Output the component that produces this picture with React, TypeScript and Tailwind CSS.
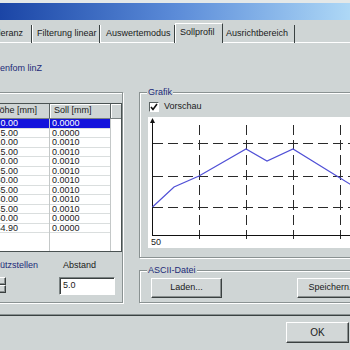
import React from 'react';

const rows = [
  { h: '0.00', s: '0.0000' },
  { h: '5.00', s: '0.0000' },
  { h: '10.00', s: '0.0010' },
  { h: '15.00', s: '0.0010' },
  { h: '20.00', s: '0.0010' },
  { h: '25.00', s: '0.0010' },
  { h: '30.00', s: '0.0010' },
  { h: '35.00', s: '0.0010' },
  { h: '40.00', s: '0.0010' },
  { h: '45.00', s: '0.0010' },
  { h: '50.00', s: '0.0000' },
  { h: '54.90', s: '0.0000' },
];

const raised =
  'bg-[#d2d7d7] border border-t-white border-l-white border-r-[#3a4040] border-b-[#3a4040] shadow-[inset_-1px_-1px_0_#8a9090]';
const etched = 'border border-[#8a9292] shadow-[inset_1px_1px_0_#fff,1px_1px_0_#fff]';

const Chart: React.FC = () => (
  <svg width="210" height="131" viewBox="0 0 210 131">
    <g stroke="#2a2a2a" strokeWidth="1" strokeDasharray="10 5" fill="none">
      <line x1="5" y1="26.5" x2="210" y2="26.5" />
      <line x1="5" y1="59.5" x2="210" y2="59.5" />
      <line x1="5" y1="90.5" x2="210" y2="90.5" />
      <line x1="51.5" y1="8" x2="51.5" y2="122" />
      <line x1="98.5" y1="8" x2="98.5" y2="122" />
      <line x1="145.5" y1="8" x2="145.5" y2="122" />
      <line x1="192.5" y1="8" x2="192.5" y2="122" />
    </g>
    <line x1="4.5" y1="4" x2="4.5" y2="119" stroke="#111" />
    <line x1="4" y1="118.5" x2="210" y2="118.5" stroke="#111" />
    <polygon points="4.5,1 2,6 7,6" fill="#111" />
    <polyline
      points="4.5,90 26,70 51,59 98,32 119,44 145,32 192,61 210,72"
      fill="none"
      stroke="#5050d6"
      strokeWidth="1.2"
    />
    <text x="3" y="128" fontSize="9" fill="#1a1a1a" fontFamily="Liberation Sans, Arial, sans-serif">
      50
    </text>
  </svg>
);

const App: React.FC = () => {
  return (
    <div className="w-[350px] h-[350px] overflow-hidden bg-[#cfd5d5] font-['Liberation_Sans',Arial,sans-serif] text-[9px] text-[#1a1a1a] flex flex-col">
      <div className="h-[3px] bg-[#e4e8e8]" />
      <div className="h-[17px] bg-linear-to-r from-[#1b45a6] via-[#5b8bd8] to-[#aed8f6]" />
      <div className="h-[3px]" />

      {/* tabs */}
      <div className="h-[20px] flex items-end shadow-[inset_0_-1px_0_#fff] whitespace-nowrap">
        <div className="w-[32px] h-[18px] border-r border-[#3a4242] flex justify-end items-center pr-[8px] overflow-hidden">
          Toleranz
        </div>
        <div className="w-[68px] h-[18px] border-r border-[#3a4242] border-l border-l-white flex items-center pl-[4px]">
          Filterung linear
        </div>
        <div className="w-[75px] h-[18px] border-r border-[#3a4242] border-l border-l-white flex items-center pl-[5px]">
          Auswertemodus
        </div>
        <div className="w-[48px] h-[20px] bg-[#cfd5d5] border-t border-l border-t-white border-l-white border-r border-r-[#3a4242] flex items-center pl-[4px] pb-[2px]">
          Sollprofil
        </div>
        <div className="w-[72px] h-[18px] border-r border-[#3a4242] flex items-center pl-[3px]">
          Ausrichtbereich
        </div>
      </div>

      {/* panel */}
      <div className="h-[273px] flex flex-col border-b border-[#3a4242] shadow-[inset_0_-1px_0_#8a9292]">
        <div className="mt-[19px] h-[12px] leading-[12px] text-[#1c2a78] whitespace-nowrap">enfom linZ</div>

        <div className="mt-[13px] flex items-start">
          {/* left group */}
          <div className={`ml-[-2px] mt-[5px] w-[134px] h-[211px] flex flex-col ${etched}`}>
            <div className="mt-[10px] w-[123px] h-[149px] border border-[#4a5252] bg-white flex flex-col">
              <div className="h-[15px] flex bg-[#cfd5d5] border-b border-[#7a8282] whitespace-nowrap">
                <div className="w-[50px] border-r border-[#5a6262] overflow-hidden flex items-center">
                  <span className="ml-[-7px]">Höhe [mm]</span>
                </div>
                <div className="w-[61px] border-r border-[#5a6262] shadow-[inset_1px_1px_0_#fff] flex items-center pl-[4px]">
                  Soll [mm]
                </div>
                <div className="flex-1 shadow-[inset_1px_1px_0_#fff]" />
              </div>
              <div className="flex-1 flex">
                <div className="w-[50px] border-r border-[#c4c8c8] flex flex-col overflow-hidden">
                  {rows.map((r, i) => (
                    <div
                      key={i}
                      className={`h-[9.5px] shrink-0 border-b border-[#dadede] leading-[9px] ${i === 0 ? 'bg-[#1414dc] text-white' : ''}`}
                    >
                      <div className="w-[18px] flex justify-end whitespace-nowrap">{r.h}</div>
                    </div>
                  ))}
                </div>
                <div className="w-[61px] border-r border-[#c4c8c8] flex flex-col">
                  {rows.map((r, i) => (
                    <div
                      key={i}
                      className={`h-[9.5px] shrink-0 border-b border-[#dadede] leading-[9px] pl-[2px] ${i === 0 ? 'bg-[#1414dc] text-white' : ''}`}
                    >
                      {r.s}
                    </div>
                  ))}
                </div>
                <div className="flex-1" />
              </div>
            </div>

            <div className="mt-[7px] h-[12px] leading-[12px] flex whitespace-nowrap">
              <div className="ml-[1px] w-[63px] text-[#1c2a78]">ützstellen</div>
              <div>Abstand</div>
            </div>

            <div className="mt-[6px] flex items-start">
              <div className="ml-[-3px] w-[10px] flex flex-col">
                <div className={`h-[8px] ${raised}`} />
                <div className={`h-[8px] ${raised}`} />
              </div>
              <div className="ml-[53px] w-[56px] h-[18px] bg-white border border-t-[#7a8282] border-l-[#7a8282] border-b-white border-r-white shadow-[inset_1px_1px_0_#3a4040] flex items-center pl-[3px]">
                5.0
              </div>
            </div>
          </div>

          {/* right column */}
          <div className="ml-[16px] w-[230px] shrink-0 flex flex-col">
            <div className={`mt-[5px] h-[166px] flex flex-col ${etched}`}>
              <div className="-mt-[6px] ml-[7px] px-[1px] self-start h-[10px] leading-[10px] bg-[#cfd5d5] text-[#1c2a78]">
                Grafik
              </div>
              <div className="mt-[5px] ml-[9px] flex items-center h-[10px]">
                <div className="w-[10px] h-[10px] bg-white border border-t-[#5a6262] border-l-[#5a6262] border-b-white border-r-white flex items-center justify-center">
                  <svg width="8" height="8" viewBox="0 0 8 8">
                    <polyline points="1,4 3,6.5 7,1" fill="none" stroke="#111" strokeWidth="1.6" />
                  </svg>
                </div>
                <span className="ml-[5px]">Vorschau</span>
              </div>
              <div className="mt-[5px] ml-[8px] h-[131px] bg-white">
                <Chart />
              </div>
            </div>

            <div className={`mt-[12px] h-[33px] flex flex-col ${etched}`}>
              <div className="-mt-[6px] ml-[7px] px-[1px] self-start h-[10px] leading-[10px] bg-[#cfd5d5] text-[#1c2a78]">
                ASCII-Datei
              </div>
              <div className="mt-[3px] flex">
                <button className={`ml-[11px] w-[82px] h-[20px] flex items-center justify-center ${raised}`}>
                  Laden...
                </button>
                <button className={`ml-[75px] w-[82px] h-[20px] flex items-center justify-center ${raised}`}>
                  Speichern...
                </button>
              </div>
            </div>
          </div>
        </div>
      </div>

      {/* footer */}
      <div className="flex justify-end">
        <button className={`mt-[6px] mr-[1px] w-[63px] h-[21px] flex items-center justify-center text-[10px] ${raised}`}>
          OK
        </button>
      </div>
    </div>
  );
};

export default App;
